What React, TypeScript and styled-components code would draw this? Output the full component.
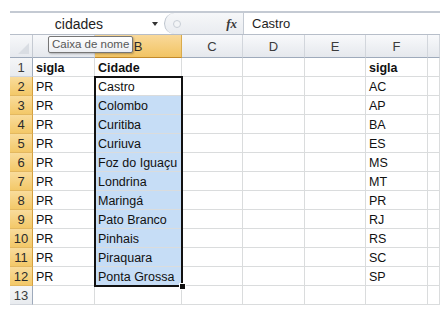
import { Fragment } from 'react';
import styled, { createGlobalStyle } from 'styled-components';

const GlobalStyle = createGlobalStyle`
    html, body {
        margin: 0;
        background: #ffffff;
    }
    body {
        font-family: 'Liberation Sans', Arial, sans-serif;
    }
`;

// widths of A..F plus the partial G column
const COL_WIDTHS = [62, 87, 61, 62, 61, 62, 12];

const cities = [
    'Castro',
    'Colombo',
    'Curitiba',
    'Curiuva',
    'Foz do Iguaçu',
    'Londrina',
    'Maringá',
    'Pato Branco',
    'Pinhais',
    'Piraquara',
    'Ponta Grossa',
];

const states = ['AC', 'AP', 'BA', 'ES', 'MS', 'MT', 'PR', 'RJ', 'RS', 'SC', 'SP'];

const Page = styled.div`
    padding: 11px 5px 0 10px;
    width: 430px;
`;

const FormulaBar = styled.div`
    display: flex;
    height: 21px;
    border-top: 2px solid #c4cad3;
    border-bottom: 1px solid #b7bec9;
    background: #ffffff;
`;

const NameBox = styled.div`
    width: 138px;
    display: flex;
    align-items: center;
    justify-content: center;
    font-size: 14px;
    color: #1e1e1e;
    padding-top: 1px;
`;

const DropArrow = styled.div`
    width: 14px;
    display: flex;
    align-items: center;
    justify-content: center;

    &::after {
        content: '';
        border-left: 3px solid transparent;
        border-right: 3px solid transparent;
        border-top: 4px solid #333;
    }
`;

const ButtonArea = styled.div`
    box-sizing: border-box;
    flex: 0 0 79px;
    display: flex;
    align-items: center;
    justify-content: space-between;
    padding-right: 6px;
    background: linear-gradient(#f6f7f9, #e9ecf0);
    border-left: 1px solid #bcc3cd;
    border-top-left-radius: 11px;
    border-bottom-left-radius: 11px;
    margin-left: 2px;
`;

const Knob = styled.div`
    width: 6px;
    height: 6px;
    margin-left: 8px;
    border-radius: 50%;
    border: 1px solid #c8ced6;
    background: #f2f4f6;
`;

const Fx = styled.span`
    font-family: 'Liberation Serif', 'Times New Roman', serif;
    font-style: italic;
    font-weight: bold;
    font-size: 13px;
    color: #3a3a3a;
`;

const FormulaInput = styled.div`
    flex: 1;
    display: flex;
    align-items: center;
    padding-left: 8px;
    font-size: 13px;
    color: #1e1e1e;
    border-left: 1px solid #c4cad3;
`;

const SheetWrap = styled.div`
    position: relative;
`;

const Grid = styled.div`
    display: grid;
    grid-template-columns: 23px ${COL_WIDTHS.map((w) => `${w}px`).join(' ')};
    grid-template-rows: 23px repeat(13, 19px);
`;

const Corner = styled.div`
    position: relative;
    background: linear-gradient(#f7f8fa, #e6e9ee);
    border-right: 1px solid #c5cad2;
    border-bottom: 1px solid #9eaabb;

    &::after {
        content: '';
        position: absolute;
        right: 3px;
        bottom: 3px;
        border-left: 11px solid transparent;
        border-bottom: 11px solid #d9dde3;
    }
`;

const ColHeader = styled.div<{ $active?: boolean }>`
    display: flex;
    align-items: center;
    justify-content: center;
    font-size: 13px;
    color: ${(p) => (p.$active ? '#2b2b2b' : '#3b3b3b')};
    background: ${(p) =>
        p.$active
            ? 'linear-gradient(#f9d99a, #f2c463)'
            : 'linear-gradient(#f8f9fb, #e5e8ed)'};
    border-right: 1px solid ${(p) => (p.$active ? '#d9ab4c' : '#d2d6dc')};
    border-bottom: 1px solid ${(p) => (p.$active ? '#c28a2c' : '#9eaabb')};
    padding-top: 1px;
`;

const RowHeader = styled.div<{ $active?: boolean }>`
    display: flex;
    align-items: center;
    justify-content: center;
    font-size: 13px;
    color: ${(p) => (p.$active ? '#2b2b2b' : '#3b3b3b')};
    background: ${(p) =>
        p.$active
            ? 'linear-gradient(#f9dc9c, #f3c868)'
            : 'linear-gradient(#f5f6f8, #e8ebef)'};
    border-right: 1px solid ${(p) => (p.$active ? '#d4a040' : '#9eaabb')};
    border-bottom: 1px solid ${(p) => (p.$active ? '#e3b860' : '#d2d6dc')};
`;

const Cell = styled.div<{ $bold?: boolean; $selected?: boolean }>`
    display: flex;
    align-items: center;
    padding: 1px 0 0 3px;
    font-size: 12.5px;
    font-weight: ${(p) => (p.$bold ? 'bold' : 'normal')};
    color: #111;
    white-space: nowrap;
    overflow: hidden;
    background: ${(p) => (p.$selected ? '#c6ddf6' : '#ffffff')};
    border-right: 1px solid #dadcdd;
    border-bottom: 1px solid #dadcdd;
`;

const Selection = styled.div`
    position: absolute;
    left: 84px;
    top: 41px;
    width: 89px;
    height: 211px;
    border: 2px solid #111;
    box-sizing: border-box;
    pointer-events: none;
`;

const FillHandle = styled.div`
    position: absolute;
    right: -5px;
    bottom: -5px;
    width: 5px;
    height: 5px;
    background: #111;
    border: 1px solid #fff;
`;

const Tooltip = styled.div`
    position: absolute;
    left: 38px;
    top: 1px;
    padding: 1px 3px 2px;
    font-size: 11.5px;
    color: #575757;
    background: linear-gradient(#ffffff, #eceef2);
    border: 1px solid #767676;
    border-radius: 2px;
    box-shadow: 1px 1px 2px rgba(0, 0, 0, 0.25);
    white-space: nowrap;
`;

const rowData = (r: number): string[] => {
    if (r === 1) return ['sigla', 'Cidade', '', '', '', 'sigla', ''];
    if (r >= 2 && r <= 12)
        return ['PR', cities[r - 2], '', '', '', states[r - 2], ''];
    return ['', '', '', '', '', '', ''];
};

const App = () => {
    const letters = ['A', 'B', 'C', 'D', 'E', 'F', ''];
    const rows = Array.from({ length: 13 }, (_, i) => i + 1);

    return (
        <>
            <GlobalStyle />
            <Page>
                <FormulaBar>
                    <NameBox>cidades</NameBox>
                    <DropArrow />
                    <ButtonArea>
                        <Knob />
                        <Fx>fx</Fx>
                    </ButtonArea>
                    <FormulaInput>Castro</FormulaInput>
                </FormulaBar>
                <SheetWrap>
                    <Grid>
                        <Corner />
                        {letters.map((l, i) => (
                            <ColHeader key={i} $active={l === 'B'}>
                                {l}
                            </ColHeader>
                        ))}
                        {rows.map((r) => (
                            <Fragment key={r}>
                                <RowHeader $active={r >= 2 && r <= 12}>{r}</RowHeader>
                                {rowData(r).map((v, c) => (
                                    <Cell
                                        key={c}
                                        $bold={r === 1}
                                        $selected={c === 1 && r >= 3 && r <= 12}
                                    >
                                        {v}
                                    </Cell>
                                ))}
                            </Fragment>
                        ))}
                    </Grid>
                    <Selection>
                        <FillHandle />
                    </Selection>
                    <Tooltip>Caixa de nome</Tooltip>
                </SheetWrap>
            </Page>
        </>
    );
};

export default App;
